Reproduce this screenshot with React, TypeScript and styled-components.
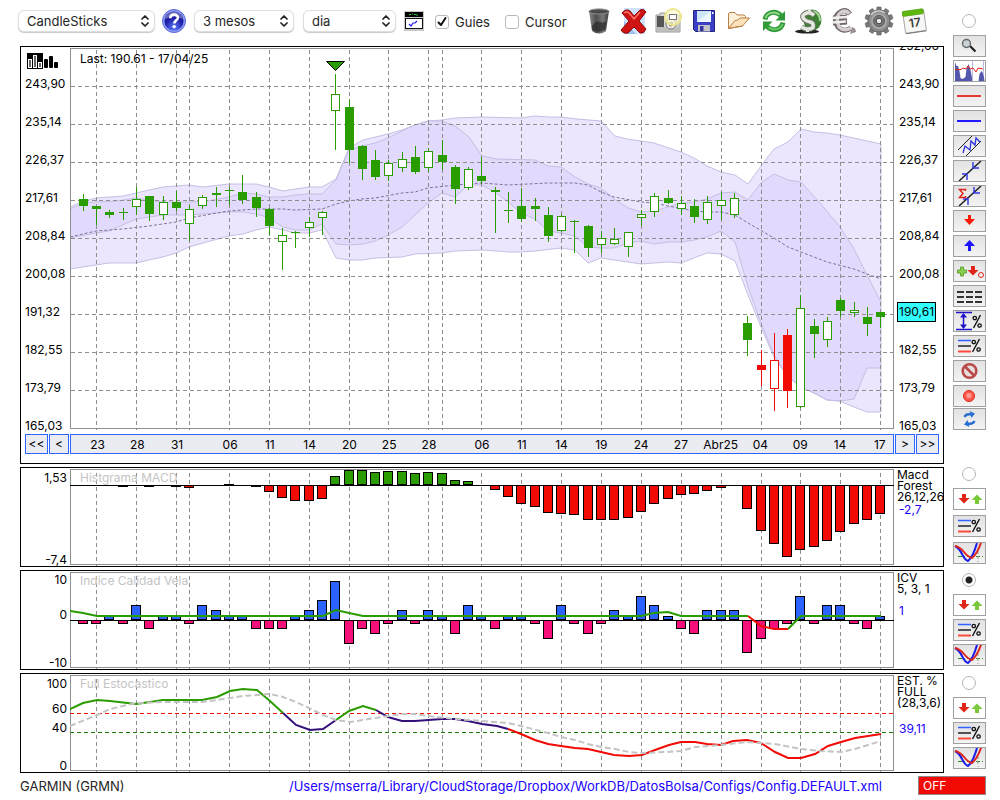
import React, { useState } from "react";
import styled, { createGlobalStyle } from "styled-components";

const GlobalStyle = createGlobalStyle`
  *, *::before, *::after { box-sizing: border-box; }
  body {
    margin: 0;
    background: #fff;
    color: #000;
    font-family: Inter, "Liberation Sans", sans-serif;
    font-size: 12px;
  }
  button, select, input { font: inherit; color: inherit; margin: 0; }
  svg { display: block; }
`;

/* ---------- layout ---------- */

const Workspace = styled.div`
  display: grid;
  grid-template-columns: minmax(0, 1fr) 33px;
  column-gap: 9px;
  row-gap: 3px;
  padding: 0 14px 0 18px;
`;

const Toolbar = styled.header`
  display: flex;
  align-items: center;
  height: 46px;
  padding-bottom: 4px;
`;

const Panel = styled.section`
  margin-left: 2px;
  border: 1px solid #000;
  overflow: hidden;
`;

const PlotRow = styled.div`
  display: grid;
  grid-template-columns: 49px minmax(0, 1fr) 49px;
`;

const PlotArea = styled.div`
  position: relative;
`;

const Caption = styled.div<{ $muted?: boolean }>`
  position: absolute;
  left: 10px;
  top: ${(p) => (p.$muted ? 3 : 5)}px;
  line-height: 14px;
  color: ${(p) => (p.$muted ? "#c4c4c4" : "#000")};
`;

const PlotSvg = styled.svg`
  width: 100%;
`;

/* ---------- toolbar ---------- */

const SelectBox = styled.div<{ $width: number; $after: number }>`
  position: relative;
  width: ${(p) => p.$width}px;
  margin-right: ${(p) => p.$after}px;
  svg {
    position: absolute;
    right: 6px;
    top: 5px;
    pointer-events: none;
  }
`;

const Select = styled.select`
  appearance: none;
  width: 100%;
  height: 22px;
  padding: 0 20px 0 8px;
  border: 1px solid #dedede;
  border-radius: 6px;
  background: #fff;
  box-shadow: 0 1px 1px rgba(0, 0, 0, 0.22);
  font-size: 13px;
  color: #262626;
`;

const IconButton = styled.button<{ $width: number; $after?: number }>`
  display: flex;
  align-items: center;
  justify-content: center;
  width: ${(p) => p.$width}px;
  height: 28px;
  margin-right: ${(p) => p.$after || 0}px;
  padding: 0;
  border: 0;
  background: none;
`;

const Check = styled.label`
  display: flex;
  align-items: center;
  gap: 6px;
  position: relative;
  width: 70px;
  padding-top: 2px;
  font-size: 13px;
  line-height: 16px;
  color: #262626;
  svg {
    position: absolute;
    left: 2px;
    top: 4px;
    pointer-events: none;
  }
`;

const CheckInput = styled.input`
  appearance: none;
  width: 14px;
  height: 14px;
  border: 1px solid #b9b9b9;
  border-radius: 3px;
  background: #fff;
`;

const IconStrip = styled.div`
  display: flex;
  gap: 3px;
  margin-left: 8px;
`;

/* ---------- axes ---------- */

const PriceAxis = styled.div<{ $side: "left" | "right" }>`
  display: flex;
  flex-direction: column;
  align-items: flex-start;
  gap: 24px;
  height: 387px;
  padding-left: ${(p) => (p.$side === "left" ? 4 : 5)}px;
  margin-top: ${(p) => (p.$side === "right" ? "-8px" : "0")};
  padding-top: ${(p) => (p.$side === "left" ? "5px" : "0")};
  > svg + div { margin-top: -16px; }
`;

const PriceLabel = styled.div`
  display: flex;
  align-items: center;
  height: 14px;
  line-height: 14px;
`;

const PriceTag = styled.span`
  margin-left: -2px;
  padding: 2px 1px;
  border: 1px solid #000;
  background: #3ff;
`;

const ValueAxis = styled.div`
  display: flex;
  flex-direction: column;
  padding-right: 3px;
`;

const ValueLabel = styled.div<{ $slot: number }>`
  display: flex;
  align-items: flex-end;
  justify-content: flex-end;
  height: ${(p) => p.$slot}px;
  line-height: 12px;
`;

const Legend = styled.div`
  padding: 1px 0 0 3px;
  line-height: 11px;
  white-space: nowrap;
`;

const LegendValue = styled.div<{ $space: number }>`
  margin-top: ${(p) => p.$space}px;
  padding-left: 2px;
  line-height: 14px;
  color: #2000ff;
`;

const DateBar = styled.nav`
  display: flex;
  gap: 1px;
  padding: 0 4px 9px;
`;

const DateButton = styled.button<{ $width: number }>`
  width: ${(p) => p.$width}px;
  height: 20px;
  padding: 0;
  border: 1px solid #2f63ff;
  background: #ebebf2;
  line-height: 18px;
`;

const Dates = styled.div`
  flex: 1;
  min-width: 0;
  display: grid;
  grid-template-columns: repeat(62, minmax(0, 1fr));
  height: 20px;
  border: 1px solid #2f63ff;
  background: #ebebf2;
  line-height: 20px;
`;

const DateLabel = styled.span<{ $day: number }>`
  grid-row: 1;
  grid-column: ${(p) => p.$day} / span 2;
  justify-self: center;
`;

/* ---------- side tools ---------- */

const ToolGroup = styled.div<{ $top: number; $gap: number }>`
  display: flex;
  flex-direction: column;
  gap: ${(p) => p.$gap}px;
  padding-top: ${(p) => p.$top}px;
`;

const RadioRow = styled.label<{ $gap: number }>`
  display: flex;
  justify-content: center;
  margin-bottom: ${(p) => 7 - p.$gap}px;
  padding-right: 2px;
`;

const RadioInput = styled.input`
  appearance: none;
  width: 14px;
  height: 14px;
  border: 1px solid #b5b5b5;
  border-radius: 50%;
  background: #fff;
  &:checked {
    background: radial-gradient(circle, #222 0 3px, #fff 4px);
  }
`;

const ToolButton = styled.button<{ $plain?: boolean }>`
  display: block;
  width: 33px;
  height: 22px;
  padding: 0;
  border: 1px solid #a0a0a0;
  background: ${(p) => (p.$plain ? "#fff" : "linear-gradient(#e2e2e2, #f3f3f3)")};
`;

const ToolPair = styled.div`
  display: flex;
  flex-direction: column;
  gap: 1px;
`;

/* ---------- footer ---------- */

const Footer = styled.footer`
  display: flex;
  align-items: center;
  padding: 3px 14px 4px 20px;
  font-size: 13px;
  line-height: 16px;
`;

const Company = styled.span`
  flex: 1;
  color: #262626;
`;

const ConfigLink = styled.a`
  margin-right: 36px;
  color: #2000ff;
  text-decoration: none;
`;

const OffButton = styled.button`
  width: 68px;
  height: 19px;
  padding: 0 4px;
  border: 1px solid #8c8c8c;
  background: #f20a05;
  color: #fff;
  font-size: 12px;
  line-height: 16px;
  text-align: left;
`;

/* ---------- chart data ---------- */

const dayX = (i: number) => Math.floor(69.97 + 13.29 * i);

const guideDays = [2, 5, 8, 9, 12, 15, 18, 21, 24, 27, 28, 31, 34, 37, 40, 43, 46, 49, 52, 55, 58, 61];

const dates: [number, string][] = [
  [2, "23"], [5, "28"], [8, "31"], [12, "06"], [15, "11"], [18, "14"], [21, "20"], [24, "25"],
  [27, "28"], [31, "06"], [34, "11"], [37, "14"], [40, "19"], [43, "24"], [46, "27"],
  [49, "Abr25"], [52, "04"], [55, "09"], [58, "14"], [61, "17"],
];

const prices = ["243,90", "235,14", "226,37", "217,61", "208,84", "200,08", "191,32", "182,55", "173,79", "165,03"];

/* high, body top, body bottom, low, kind: f filled, h hollow, F/H the same in red */
const candles: [number, number, number, number, string][] = [
  [194, 199, 206, 211, "f"], [206, 206, 209, 225, "f"], [210, 212, 215, 218, "f"], [208, 212, 213, 220, "f"],
  [187, 199, 207, 215, "h"], [196, 196, 214, 221, "f"], [196, 202, 215, 220, "h"], [191, 202, 208, 211, "f"],
  [205, 209, 224, 241, "h"], [195, 197, 206, 209, "h"], [187, 193, 195, 207, "f"], [187, 190, 191, 205, "f"],
  [175, 192, 200, 204, "f"], [192, 197, 208, 217, "f"], [208, 209, 226, 235, "f"], [228, 235, 242, 270, "h"],
  [231, 232, 233, 248, "f"], [217, 222, 228, 237, "h"], [211, 212, 218, 235, "h"], [74, 94, 111, 150, "h"],
  [100, 107, 150, 163, "f"], [145, 146, 169, 180, "f"], [150, 160, 177, 180, "f"], [160, 163, 176, 181, "h"],
  [152, 159, 168, 172, "h"], [146, 157, 172, 174, "f"], [148, 151, 168, 172, "h"], [140, 155, 162, 170, "f"],
  [165, 167, 189, 204, "f"], [167, 169, 188, 190, "h"], [157, 176, 181, 184, "f"], [187, 190, 192, 233, "f"],
  [192, 210, 211, 223, "f"], [188, 206, 219, 222, "f"], [198, 206, 209, 221, "f"], [207, 215, 236, 242, "f"],
  [214, 216, 231, 232, "h"], [220, 221, 222, 253, "f"], [225, 226, 248, 257, "f"], [231, 238, 245, 253, "h"],
  [228, 239, 244, 245, "h"], [232, 232, 247, 257, "h"], [210, 214, 218, 226, "h"], [193, 196, 212, 217, "h"],
  [190, 198, 203, 204, "f"], [196, 203, 209, 215, "h"], [199, 206, 217, 223, "f"], [196, 202, 220, 224, "h"],
  [192, 200, 206, 220, "h"], [193, 198, 215, 218, "h"], [316, 323, 340, 356, "f"], [350, 365, 370, 386, "F"],
  [333, 360, 389, 411, "H"], [329, 335, 391, 408, "F"], [295, 308, 407, 408, "h"], [319, 326, 334, 358, "f"],
  [317, 321, 340, 347, "h"], [298, 300, 311, 317, "f"], [302, 310, 313, 317, "h"], [307, 317, 324, 336, "f"],
  [312, 312, 317, 328, "f"],
];

const bandTop = "70,207 83,201 97,198 123,196 136,193 163,187 189,185 203,187 229,184 256,184 269,187 283,191 309,187 322,187 336,179 349,148 363,140 388,134 402,130 415,125 428,121 442,120 455,118 482,117 521,118 535,116 548,117 561,117 577,119 601,121 615,136 627,139 641,141 654,143 681,152 694,158 707,166 721,172 735,175 748,184 761,166 774,149 788,142 801,129 814,132 827,133 840,135 881,144";
const innerTop = "70,209 83,203 96,202 117,201 136,198 149,200 163,202 189,202 207,201 229,197 243,193 256,194 269,197 283,197 295,195 309,194 322,194 336,180 349,150 362,146 375,143 388,138 402,131 415,125 428,121 442,121 455,126 469,137 482,156 497,159 535,160 548,166 561,167 575,177 588,184 601,188 614,199 628,208 641,212 654,211 668,207 681,203 694,202 707,199 721,193 735,192 748,200 761,183 774,174 788,180 801,182 820,203 840,227 854,249 867,275 881,302";
const innerBottom = "70,238 96,233 109,231 136,219 149,217 163,215 189,215 229,212 243,212 256,214 267,217 283,227 295,230 309,230 322,224 336,244 349,245 363,244 375,241 388,235 402,227 415,215 428,203 442,193 455,197 468,185 482,185 495,192 508,202 521,213 535,219 548,231 561,233 575,236 588,247 601,248 614,248 628,243 641,241 654,244 668,242 681,242 694,240 707,237 721,231 735,242 748,287 761,323 774,355 788,377 801,387 814,393 827,400 840,401 854,399 867,368 881,368";
const bandBottom = "70,269 83,267 109,263 136,263 149,260 163,257 176,253 189,247 203,243 229,236 243,234 256,230 269,227 283,230 295,233 309,233 322,230 336,258 349,260 362,260 375,258 402,257 415,254 442,253 455,251 482,250 510,252 521,252 535,251 561,248 575,250 588,263 601,258 614,260 628,262 641,264 654,263 668,262 681,263 694,258 707,253 721,254 735,261 748,295 761,327 774,357 788,377 801,387 814,393 827,400 840,401 854,407 867,412 881,412";
const average = "70,237 96,231 123,229 149,226 176,222 189,218 217,213 229,211 256,209 283,209 295,210 322,209 336,204 349,201 362,199 375,198 402,193 415,192 428,188 455,185 468,184 482,183 508,185 548,183 575,183 588,185 601,192 614,197 641,202 654,203 668,206 694,211 707,212 721,212 735,215 748,223 774,238 788,247 814,257 827,262 854,269 867,274 881,279";

/* end of each bar on the plot, by day */
const macdBars: Record<number, number> = {
  4: 487, 6: 487, 8: 487, 9: 488, 12: 484, 14: 487, 15: 492, 16: 498, 17: 501, 18: 501, 19: 499,
  20: 476, 21: 470, 22: 470, 23: 472, 24: 471, 25: 471, 26: 473, 27: 472, 28: 473, 29: 480, 30: 481,
  32: 490, 33: 497, 34: 504, 35: 507, 36: 513, 37: 514, 38: 515, 39: 520, 40: 520, 41: 520, 42: 518,
  43: 512, 44: 504, 45: 499, 46: 495, 47: 494, 48: 491, 49: 488, 51: 509, 52: 531, 53: 544, 54: 557,
  55: 550, 56: 547, 57: 541, 58: 532, 59: 524, 60: 520, 61: 514,
};

const icvBars: Record<number, number> = {
  1: 624, 2: 624, 3: 616, 4: 624, 5: 605, 6: 629, 7: 616, 8: 616, 9: 624, 10: 605, 11: 610, 12: 616,
  13: 616, 14: 629, 15: 629, 16: 629, 17: 616, 18: 610, 19: 600, 20: 581, 21: 644, 22: 629, 23: 634,
  24: 624, 25: 610, 26: 624, 27: 610, 28: 616, 29: 634, 30: 605, 31: 616, 32: 629, 33: 616, 34: 616,
  35: 624, 36: 639, 37: 605, 38: 624, 39: 634, 40: 624, 41: 610, 42: 616, 43: 596, 44: 605, 45: 616,
  46: 629, 47: 634, 48: 610, 49: 610, 50: 610, 51: 653, 52: 639, 53: 629, 54: 624, 55: 596, 56: 624,
  57: 605, 58: 605, 59: 624, 60: 629, 61: 616,
};

const icvLine: [string, string][] = [
  ["#2a9c00", "70,611 83,613 97,616 323,616 336,610 349,613 363,616 641,616 654,613 668,612 681,616 748,616"],
  ["#f20a05", "748,616 761,626 774,629 788,629"],
  ["#2a9c00", "788,629 801,616 881,616"],
];

const stochLine: [string, string][] = [
  ["#2a9c00", "70,709 83,703 97,700 110,701 136,704 150,702 163,700 202,700 217,697 230,691 243,689 257,690 270,701 283,713"],
  ["#33107a", "283,713 296,725 310,730 323,729 336,720"],
  ["#2a9c00", "336,720 349,711 363,706 376,710"],
  ["#33107a", "376,710 388,717 402,721 415,721 442,719 455,719 468,721 482,724 497,726 508,729"],
  ["#f20a05", "508,729 521,734 535,740 548,744 561,746 575,748 588,749 601,752 614,755 629,756 642,755 655,750 669,745 681,742 695,742 707,744 721,745 733,741 747,740 761,743 775,752 788,758 801,758 815,754 828,746 841,742 855,738 881,734"],
];
const stochSignal = "70,726 97,715 110,709 136,703 163,702 202,702 217,700 243,696 270,694 283,697 296,702 309,708 323,715 336,720 350,722 363,720 388,716 402,714 415,714 428,716 455,719 482,721 508,723 521,726 548,733 561,737 575,740 588,744 601,747 615,749 629,752 642,753 667,752 681,751 695,747 721,745 747,742 775,744 801,749 820,751 841,752 855,749 881,741";

const reversed = (points: string) => points.split(" ").reverse().join(" ");

/* ---------- charts ---------- */

function Guides({ top, bottom }: { top: number; bottom: number }) {
  return (
    <g stroke="#8e8e8e" strokeDasharray="4 3">
      {guideDays.map((d) => (
        <path key={d} d={`M${dayX(d) + 0.5} ${top}V${bottom}`} />
      ))}
    </g>
  );
}

function PriceChart() {
  return (
    <PlotSvg viewBox="70 47 824 387" height={387} preserveAspectRatio="none" role="img" aria-label="GARMIN candlesticks">
      <polygon points={`${bandTop} ${reversed(bandBottom)}`} fill="#ebe6fe" />
      <polygon points={`${innerTop} ${reversed(innerBottom)}`} fill="#e2dafc" />
      <g fill="none" stroke="#c5bfe3">
        <polygon points={`${bandTop} ${reversed(bandBottom)}`} />
        <polyline points={innerTop} />
        <polyline points={innerBottom} />
      </g>
      <polyline points={average} fill="none" stroke="#7d7596" strokeDasharray="3 2" />
      <Guides top={50} bottom={430} />
      <g stroke="#8e8e8e" strokeDasharray="4 3">
        {Array.from({ length: 9 }, (_, i) => (
          <path key={i} d={`M71 ${86.5 + i * 38}H894`} />
        ))}
      </g>
      <rect x="70.5" y="48.5" width="823" height="380" fill="none" stroke="#8e8e8e" />
      {candles.map(([high, top, bottom, low, kind], i) => {
        const x = dayX(i + 1);
        const color = kind === "F" || kind === "H" ? "#f20a05" : "#2a9c00";
        const hollow = kind === "h" || kind === "H";
        return (
          <g key={i}>
            <rect x={x} y={high} width="1" height={low - high} fill={color} />
            {hollow ? (
              <rect x={x - 3.5} y={top + 0.5} width="8" height={bottom - top - 1} fill="#fff" stroke={color} />
            ) : (
              <rect x={x - 4} y={top} width="9" height={bottom - top} fill={color} />
            )}
          </g>
        );
      })}
      <path d="M326.5 61.5H344.5L335.5 70.5Z" fill="#2a9c00" stroke="#000" />
    </PlotSvg>
  );
}

function Bars({ data, zero, up, down }: { data: Record<number, number>; zero: number; up: string; down: string }) {
  return (
    <g stroke="#000">
      {Object.entries(data).map(([day, end]) => {
        const x = dayX(Number(day)) - 4.5;
        return end < zero ? (
          <rect key={day} x={x} y={end + 0.5} width="9" height={Math.max(zero - end - 1, 0)} fill={up} />
        ) : (
          <rect key={day} x={x} y={zero + 0.5} width="9" height={end - zero - 1} fill={down} />
        );
      })}
    </g>
  );
}

function PlotFrame({ top }: { top: number }) {
  return <rect x="70.5" y={top + 0.5} width="823" height="95" fill="none" stroke="#8e8e8e" />;
}

function MacdChart() {
  return (
    <PlotSvg viewBox="70 468 824 98" height={98} preserveAspectRatio="none" role="img" aria-label="MACD histogram">
      <Guides top={473} bottom={566} />
      <PlotFrame top={469} />
      <Bars data={macdBars} zero={485} up="#2a9c00" down="#f20a05" />
      <path d="M70 485.5H894M224 484.5H234" stroke="#000" />
    </PlotSvg>
  );
}

function IcvChart() {
  return (
    <PlotSvg viewBox="70 571 824 98" height={98} preserveAspectRatio="none" role="img" aria-label="Indice Calidad Vela">
      <Guides top={576} bottom={669} />
      <PlotFrame top={572} />
      <Bars data={icvBars} zero={620} up="#2a63ff" down="#f5107a" />
      <path d="M70 620.5H894" stroke="#000" />
      {icvLine.map(([color, points], i) => (
        <polyline key={i} points={points} fill="none" stroke={color} strokeWidth="2" />
      ))}
    </PlotSvg>
  );
}

function StochChart() {
  return (
    <PlotSvg viewBox="70 674 824 98" height={98} preserveAspectRatio="none" role="img" aria-label="Full Estocastico">
      <Guides top={679} bottom={772} />
      <PlotFrame top={675} />
      <path d="M70 713.5H894" stroke="#f20a05" strokeDasharray="4 3" />
      <path d="M70 732.5H894" stroke="#1d7a0a" strokeDasharray="4 3" />
      {stochLine.map(([color, points], i) => (
        <polyline key={i} points={points} fill="none" stroke={color} strokeWidth="2" />
      ))}
      <polyline points={stochSignal} fill="none" stroke="#c4c4c4" strokeWidth="2" strokeDasharray="6 3" />
    </PlotSvg>
  );
}

/* ---------- toolbar icons ---------- */

const Chevrons = () => (
  <svg width="8" height="12" viewBox="0 0 8 12" fill="none" stroke="#222" strokeWidth="1.7" strokeLinecap="round" strokeLinejoin="round">
    <path d="M1 4L4 1L7 4M1 8L4 11L7 8" />
  </svg>
);

const HelpIcon = () => (
  <svg width="26" height="26" viewBox="0 0 26 26">
    <defs>
      <radialGradient id="help" cx="0.5" cy="0.85" r="0.8">
        <stop offset="0" stopColor="#5f7dff" />
        <stop offset="0.6" stopColor="#1d1fa8" />
        <stop offset="1" stopColor="#1a1890" />
      </radialGradient>
    </defs>
    <circle cx="13" cy="13" r="11.5" fill="#8ea0f5" stroke="#5a63d8" />
    <circle cx="13" cy="13" r="9.6" fill="url(#help)" />
    <path d="M4 11a9.2 9.2 0 0 1 18 0q-9-5-18 0z" fill="#fff" opacity="0.35" />
    <path d="M9.3 10.2c0-4.8 7.8-4.6 7.6-.4-.1 2.6-3.6 2.6-3.6 5.6" fill="none" stroke="#fff" strokeWidth="2.6" />
    <circle cx="13.2" cy="18.6" r="1.7" fill="#fff" />
  </svg>
);

const ScreenIcon = () => (
  <svg width="20" height="20" viewBox="0 0 20 20">
    <rect width="20" height="20" fill="#c9c9c9" />
    <rect x="1" y="1" width="18" height="5" fill="#000" />
    <path d="M5 3.5h2M8 3h1M10 3.5h2M13 3v2" stroke="#2fbf2f" />
    <rect x="1.5" y="7.5" width="17" height="10" fill="#fff" stroke="#111" />
    <path d="M5 13l2 2 2-3 2 0 2-2" fill="none" stroke="#2418ff" strokeWidth="1.2" />
  </svg>
);

const TrashIcon = () => (
  <svg width="24" height="28" viewBox="0 0 24 28">
    <defs>
      <linearGradient id="bin" x1="0" x2="1">
        <stop offset="0" stopColor="#8b8b8b" />
        <stop offset="0.35" stopColor="#4e4e4e" />
        <stop offset="0.7" stopColor="#777" />
        <stop offset="1" stopColor="#3c3c3c" />
      </linearGradient>
    </defs>
    <path d="M2 4L5 24q7 5 14 0L22 4z" fill="url(#bin)" />
    <path d="M4.5 20q4-7 9-5t6-3l-1 10q-6 5-13 1z" fill="#2c2c2c" opacity="0.75" />
    <ellipse cx="12" cy="4.5" rx="10" ry="2.6" fill="#4a4a4a" stroke="#8d8d8d" />
  </svg>
);

const DeleteIcon = () => (
  <svg width="28" height="28" viewBox="0 0 28 28">
    <rect x="4" y="1" width="21" height="26" fill="#cfe2fb" />
    <path d="M4 14L16 27H4z" fill="#9cc0ee" />
    <path d="M2 6q4-5 8-2l4 5 6-6q4-2 6 2l-7 9 7 8q-2 5-6 4l-6-6-6 6q-5 1-7-3l8-9z" fill="#d01414" stroke="#8c0808" />
    <path d="M4 6q3-2 5 0l5 6 6-7" fill="none" stroke="#ff7a6e" strokeWidth="1.4" />
  </svg>
);

const CameraIcon = () => (
  <svg width="28" height="28" viewBox="0 0 28 28">
    <path d="M1 8h4V6h5v2h15v17H1z" fill="#d6d6d6" stroke="#9a9a9a" />
    <rect x="2" y="9" width="7" height="15" fill="#555" />
    <rect x="2" y="20" width="22" height="4" fill="#bdbdbd" />
    <rect x="10" y="9" width="14" height="11" fill="#c8c8c8" />
    <circle cx="16" cy="17" r="5" fill="#eee" stroke="#777" />
    <circle cx="16" cy="17" r="2.5" fill="#888" />
    <circle cx="18" cy="10" r="8" fill="#fffbd0" fillOpacity="0.65" stroke="#ece68c" strokeWidth="2" />
    <rect x="14.5" y="7.5" width="7" height="5" fill="#fff" stroke="#777" />
  </svg>
);

const FloppyIcon = () => (
  <svg width="22" height="22" viewBox="0 0 22 22">
    <path d="M.5.5h21v21H2.5L.5 19.5z" fill="#3a3fc4" stroke="#23267f" />
    <path d="M4 1h14v11H4z" fill="#cfe6fa" />
    <path d="M4 12L18 1v11z" fill="#eef7ff" />
    <rect x="5" y="15" width="12" height="6.5" fill="#c3c3c9" />
    <rect x="7" y="16" width="3.5" height="5" fill="#34379f" />
    <rect x="19" y="2" width="1.5" height="2" fill="#fff" />
  </svg>
);

const FolderIcon = () => (
  <svg width="24" height="20" viewBox="0 0 24 20" strokeLinejoin="round">
    <path d="M1.5 17.5V2.5l1.5-1h5l2 2.5h7l1.5 1.5V9" fill="#fdf0d8" stroke="#b97f45" />
    <path d="M1.5 17.5L8 9.5l3-.5 2-2 9.5 0L15.5 15z" fill="#fbe2ba" stroke="#b97f45" />
    <path d="M1.5 17.5L15.5 15" stroke="#b97f45" />
  </svg>
);

const RefreshIcon = () => (
  <svg width="26" height="26" viewBox="0 0 26 26" fill="none">
    <path d="M4 11.500C5.500 4 14 2 20 7.500" stroke="#2f9a37" strokeWidth="5" />
    <path d="M24 3v9.500h-9.500z" fill="#2f9a37" />
    <path d="M22 14.500C20.500 22 12 24 6 18.500" stroke="#2f9a37" strokeWidth="5" />
    <path d="M2 23v-9.500h9.500z" fill="#2f9a37" />
    <path d="M4.500 10C6.500 4.500 13 3 18.500 6.500" stroke="#93da8b" strokeWidth="2" />
    <path d="M21.500 16C19.500 21.500 13 23 7.500 19.500" stroke="#6cc768" strokeWidth="2" />
  </svg>
);

const DollarIcon = () => (
  <svg width="28" height="28" viewBox="0 0 28 28" fill="none">
    <ellipse cx="12" cy="24.5" rx="12" ry="2" fill="#222" />
    <ellipse cx="17.5" cy="13" rx="9" ry="10.5" fill="#3f7f35" />
    <path d="M18 4q7 2 7 10" stroke="#a5d894" strokeWidth="2" />
    <path d="M19 8.500Q15 4 10.500 6.500T9 12q2 2.500 6 3t3 5.500Q13 24 6.500 20" stroke="#6d7568" strokeWidth="5.500" />
    <path d="M19 8.500Q15 4 10.500 6.500T9 12q2 2.500 6 3t3 5.500Q13 24 6.500 20" stroke="#e4e8df" strokeWidth="3.600" />
    <path d="M14.500 2v4M12.500 21v4" stroke="#dfe3da" strokeWidth="3" />
  </svg>
);

const EuroIcon = () => (
  <svg width="28" height="28" viewBox="0 0 28 28" fill="none">
    <path d="M20 7Q15 1 9 6T8 20q6 6 13 1M3 11l14-1M3 16l14-1" stroke="#6d6466" strokeWidth="5" />
    <path d="M22 20q4 1 4 5l-6 2" fill="#9a8f90" />
    <path d="M19.5 6.5Q15 2 10 6T9 20q5 5 12 1" stroke="#d5cfd0" strokeWidth="3.4" />
    <path d="M2 11l15-1M2 15.5l14-1" stroke="#f1eeee" strokeWidth="2.6" />
  </svg>
);

const GearIcon = () => (
  <svg width="30" height="30" viewBox="-15 -15 30 30">
    <g fill="#7b7b7b" stroke="#5c5c5c" strokeWidth="0.6">
      {Array.from({ length: 10 }, (_, i) => (
        <path key={i} d="M-2.600-10L-2-14H2L2.600-10z" transform={`rotate(${i * 36})`} />
      ))}
    </g>
    <circle r="11" fill="#8b8b8b" stroke="#666" />
    <circle r="8" fill="#a9a9a9" />
    <circle r="5.5" fill="#777" stroke="#5a5a5a" />
    <circle r="2.8" fill="#ececec" stroke="#444" />
    <path d="M-8-6A10 10 0 0 1 6-8" fill="none" stroke="#ccc" strokeWidth="1.5" />
  </svg>
);

const CalendarIcon = () => (
  <svg width="28" height="26" viewBox="0 0 28 26">
    <g transform="rotate(-8 14 13)">
      <rect x="4" y="3" width="21" height="21" rx="1" fill="#f7f7f5" stroke="#a8a8a8" />
      <path d="M4 24.5H25" stroke="#777" />
      <rect x="3.5" y="2" width="21" height="5" rx="1" fill="#5fb80d" stroke="#4a960a" strokeWidth="0.6" />
      <text x="14.5" y="19" fontSize="12" fontWeight="600" fill="#3a3a3a" textAnchor="middle" fontFamily="Inter, sans-serif">17</text>
    </g>
  </svg>
);

const CandleLogo = () => (
  <svg width="34" height="17" viewBox="-1 0 34 17">
    <rect x="1" y="1" width="16" height="16" />
    <g fill="#666" stroke="#fff">
      <rect x="2.5" y="7.5" width="3" height="8" />
      <rect x="7.5" y="3.5" width="3" height="12" />
      <rect x="12.5" y="10.5" width="3" height="5" />
    </g>
    <rect x="18" y="7" width="4" height="9" rx="1" />
    <rect x="23" y="4" width="4" height="12" rx="1" />
    <rect x="28" y="10" width="4" height="6" rx="1" />
  </svg>
);

/* ---------- side tool icons, all drawn on the 31x20 inside of a button ---------- */

const Glyph = ({ children }: { children: React.ReactNode }) => (
  <svg width="31" height="20" viewBox="0 0 31 20" fill="none">{children}</svg>
);

const Percent = ({ x, y }: { x: number; y: number }) => (
  <g stroke="#111" strokeWidth="1.3" transform={`translate(${x} ${y})`}>
    <path d="M7.5 0L.5 13" strokeWidth="1.4" />
    <circle cx="1.8" cy="3" r="1.7" />
    <circle cx="6.6" cy="10.5" r="1.7" />
  </g>
);

const LevelsPercent = () => (
  <Glyph>
    <path d="M4 4.5H17" stroke="#2f63ff" strokeWidth="1.5" />
    <path d="M4 10H17" stroke="#222" strokeWidth="1.5" />
    <path d="M4 15.5H17" stroke="#fa4b3c" strokeWidth="2" />
    <Percent x={18} y={3} />
  </Glyph>
);

const BuySell = () => (
  <Glyph>
    <path d="M8 5h4v4h3.500L10 14.5 4.5 9H8z" fill="#e0261b" />
    <path d="M21 15h4v-4h3.500L23 5.500 17.500 11H21z" fill="#7ac93b" />
  </Glyph>
);

const CrossCurves = () => (
  <Glyph>
    <path d="M4 13.5H29" stroke="#2f8a1d" strokeDasharray="4 2 1 2" />
    <path d="M24 8V19" stroke="#999" strokeDasharray="3 2" />
    <path d="M1 3Q5 5 8 11T14 18Q19 14 23 0" stroke="#1c1ce8" strokeWidth="2" />
    <path d="M1 3Q6 4 10 9T18 15Q23 11 27 0" stroke="#e0261b" strokeWidth="2" />
  </Glyph>
);

const sideTools: Record<string, React.ReactNode> = {
  Zoom: (
    <Glyph>
      <path d="M16 10L21.5 15.5" stroke="#222" strokeWidth="2.2" />
      <circle cx="12.5" cy="7.5" r="4" fill="#c9d2d8" stroke="#666" strokeWidth="1.4" />
    </Glyph>
  ),
  Overview: (
    <Glyph>
      <rect width="31" height="20" fill="#fff" />
      <path d="M1 20V1l1.500 4 1.500 0 1.500 5 1 7 2 1 3-2 1-8 2-5 2 6 1 5 1 6h6l1-7 2-3 2 3 1 7z" fill="#5458ad" />
      <path d="M18.5 0V20M29.5 0V14" stroke="#b9bbe0" />
      <path d="M1 8.5H7L9 7 12 8 14 5 16 8 19 7 22 11 24 7 29 8" stroke="#e0261b" />
    </Glyph>
  ),
  "Red line": <Glyph><path d="M3 10H27" stroke="#e63a30" strokeWidth="2" /></Glyph>,
  "Blue line": <Glyph><path d="M3 10H27" stroke="#2418ff" strokeWidth="2" /></Glyph>,
  Channel: (
    <Glyph>
      <path d="M4 14L18 0M12 20L27 5" stroke="#222" />
      <path d="M9 17L11 10 16 14 17 5 21 9 22 2 26 6" stroke="#2f35e0" strokeWidth="1.3" />
    </Glyph>
  ),
  Trend: (
    <Glyph>
      <path d="M5 20L27 0" stroke="#222" strokeWidth="1.5" />
      <path d="M8 13H13V19M19 1V7H25" stroke="#2f35e0" strokeWidth="1.4" />
    </Glyph>
  ),
  "Trend sum": (
    <Glyph>
      <path d="M5 20L27 0" stroke="#222" strokeWidth="1.5" />
      <path d="M9 13H14V19M20 1V7H26" stroke="#2f35e0" strokeWidth="1.4" />
      <path d="M11.5 5V3.5H5.5L9 7.5 5.5 11.5H11.5V10" stroke="#e0261b" strokeWidth="1.5" />
    </Glyph>
  ),
  Sell: <Glyph><path d="M14 4h3v4h4l-5.500 6L10 8h4z" fill="#fa1a08" /></Glyph>,
  Buy: <Glyph><path d="M14 15h3v-5h4l-5.500-6L10 10h4z" fill="#1c14ff" /></Glyph>,
  Marks: (
    <Glyph>
      <path d="M6.500 6h3v3h3v3h-3v3h-3v-3h-3V9h3z" fill="#8ad04e" stroke="#4f9b22" strokeWidth="0.8" />
      <path d="M17 5h4v4h3.500L19 14.500 13.500 9H17z" fill="#e0261b" />
      <circle cx="27" cy="14" r="2.5" stroke="#e0261b" />
    </Glyph>
  ),
  Levels: (
    <Glyph>
      <path d="M3 6H28M3 11H28M3 16H28" stroke="#333" strokeWidth="2" strokeDasharray="7 2" />
    </Glyph>
  ),
  "Range percent": (
    <Glyph>
      <path d="M2 1.5H18M2 18.5H18M9.500 3V17" stroke="#2010c8" strokeWidth="1.5" />
      <path d="M9.500 2L13 6.500H6zM9.500 18L13 13.500H6z" fill="#2010c8" />
      <Percent x={19} y={4} />
    </Glyph>
  ),
  "Level percent": <LevelsPercent />,
  Forbid: (
    <Glyph>
      <circle cx="15.5" cy="10" r="6.8" fill="#e9dede" stroke="#b94a4a" strokeWidth="2.6" />
      <path d="M11 5.5L20 14.5" stroke="#b94a4a" strokeWidth="2.6" />
    </Glyph>
  ),
  Record: (
    <Glyph>
      <circle cx="15" cy="10" r="5.5" fill="#ff5a50" stroke="#e0261b" />
      <circle cx="15" cy="9.5" r="2.5" fill="#ff9a90" />
    </Glyph>
  ),
  Reload: (
    <Glyph>
      <path d="M10.5 8Q12 4.5 17 5.5" stroke="#2a6fd0" strokeWidth="2.4" />
      <path d="M15.5 2L21 4.5 17.5 9z" fill="#2a6fd0" />
      <path d="M20.5 12Q19 15.5 14 14.5" stroke="#2a6fd0" strokeWidth="2.4" />
      <path d="M15.5 18L10 15.5 13.5 11z" fill="#2a6fd0" />
    </Glyph>
  ),
};

const mainTools = ["Zoom", "Overview", "Red line", "Blue line", "Channel", "Trend", "Trend sum", "Sell", "Buy", "Marks", "Levels", "Range percent", "Level percent", "Forbid"];

const toolbarActions: [string, React.ReactNode][] = [
  ["Trash", <TrashIcon />], ["Delete", <DeleteIcon />], ["Capture", <CameraIcon />], ["Save", <FloppyIcon />],
  ["Open", <FolderIcon />], ["Refresh", <RefreshIcon />], ["Dollar", <DollarIcon />], ["Euro", <EuroIcon />],
  ["Settings", <GearIcon />], ["Calendar", <CalendarIcon />],
];

/* ---------- composed parts ---------- */

function Picker({ label, value, width, after }: { label: string; value: string; width: number; after: number }) {
  return (
    <SelectBox $width={width} $after={after}>
      <Select aria-label={label} defaultValue={value}>
        <option>{value}</option>
      </Select>
      <Chevrons />
    </SelectBox>
  );
}

function CheckOption({ label, initial }: { label: string; initial: boolean }) {
  const [on, setOn] = useState(initial);
  return (
    <Check>
      <CheckInput type="checkbox" checked={on} onChange={() => setOn(!on)} />
      {on && (
        <svg width="10" height="11" viewBox="0 0 10 11" fill="none" stroke="#111" strokeWidth="2" strokeLinecap="round" strokeLinejoin="round">
          <path d="M1.5 6.5L4 9L8.5 2" />
        </svg>
      )}
      {label}
    </Check>
  );
}

function PanelRadio({ label, checked, gap, onPick }: { label: string; checked: boolean; gap: number; onPick: () => void }) {
  return (
    <RadioRow $gap={gap}>
      <RadioInput type="radio" name="panel" aria-label={label} checked={checked} onChange={onPick} />
    </RadioRow>
  );
}

const indicators = [
  { title: "Histgrama MACD", chart: <MacdChart />, axis: [["1,53", 16], ["-7,4", 82]], legend: ["Macd", "Forest", "26,12,26"], value: "-2,7", space: 1, top: 0, gap: 5 },
  { title: "Indice Calidad Vela", chart: <IcvChart />, axis: [["10", 15], ["0", 35], ["-10", 48]], legend: ["ICV", "5, 3, 1"], value: "1", space: 10, top: 3, gap: 3 },
  { title: "Full Estocastico", chart: <StochChart />, axis: [["100", 16], ["60", 25], ["40", 19], ["0", 38]], legend: ["EST. %", "FULL", "(28,3,6)"], value: "39,11", space: 14, top: 3, gap: 3 },
] as const;

export default function App() {
  const [active, setActive] = useState("Indice Calidad Vela");
  return (
    <>
      <GlobalStyle />
      <Workspace>
        <div>
          <Toolbar>
            <Picker label="Chart type" value="CandleSticks" width={137} after={6} />
            <IconButton $width={26} $after={7} aria-label="Help"><HelpIcon /></IconButton>
            <Picker label="Period" value="3 mesos" width={100} after={9} />
            <Picker label="Interval" value="dia" width={93} after={8} />
            <IconButton $width={20} $after={11} aria-label="Screen"><ScreenIcon /></IconButton>
            <CheckOption label="Guies" initial />
            <CheckOption label="Cursor" initial={false} />
            <IconStrip>
              {toolbarActions.map(([name, icon]) => (
                <IconButton key={name} $width={32} aria-label={name}>{icon}</IconButton>
              ))}
            </IconStrip>
          </Toolbar>
          <Panel>
            <PlotRow>
              <PriceAxis $side="left">
                <CandleLogo />
                {prices.map((p) => <PriceLabel key={p}>{p}</PriceLabel>)}
              </PriceAxis>
              <PlotArea>
                <PriceChart />
                <Caption>Last: 190.61 - 17/04/25</Caption>
              </PlotArea>
              <PriceAxis $side="right">
                <PriceLabel>252,66</PriceLabel>
                {prices.map((p) => (
                  <PriceLabel key={p}>{p === "191,32" ? <PriceTag>190,61</PriceTag> : p}</PriceLabel>
                ))}
              </PriceAxis>
            </PlotRow>
            <DateBar aria-label="Dates">
              <DateButton $width={23}>&lt;&lt;</DateButton>
              <DateButton $width={20}>&lt;</DateButton>
              <Dates>
                {dates.map(([day, text]) => <DateLabel key={day} $day={day}>{text}</DateLabel>)}
              </Dates>
              <DateButton $width={20}>&gt;</DateButton>
              <DateButton $width={23}>&gt;&gt;</DateButton>
            </DateBar>
          </Panel>
        </div>
        <ToolGroup $top={14} $gap={3}>
          <PanelRadio label="Price" gap={3} checked={active === "Price"} onPick={() => setActive("Price")} />
          {mainTools.map((t) => <ToolButton key={t} aria-label={t}>{sideTools[t]}</ToolButton>)}
          <ToolPair>
            <ToolButton aria-label="Record">{sideTools.Record}</ToolButton>
            <ToolButton aria-label="Reload">{sideTools.Reload}</ToolButton>
          </ToolPair>
        </ToolGroup>
        {indicators.map((ind) => (
          <React.Fragment key={ind.title}>
            <Panel>
              <PlotRow>
                <ValueAxis>
                  {ind.axis.map(([text, slot]) => <ValueLabel key={text} $slot={slot}>{text}</ValueLabel>)}
                </ValueAxis>
                <PlotArea>
                  {ind.chart}
                  <Caption $muted>{ind.title}</Caption>
                </PlotArea>
                <Legend>
                  {ind.legend.map((line) => <div key={line}>{line}</div>)}
                  <LegendValue $space={ind.space}>{ind.value}</LegendValue>
                </Legend>
              </PlotRow>
            </Panel>
            <ToolGroup $top={ind.top} $gap={ind.gap}>
              <PanelRadio label={ind.title} gap={ind.gap} checked={active === ind.title} onPick={() => setActive(ind.title)} />
              <ToolButton $plain aria-label="Signals"><BuySell /></ToolButton>
              <ToolButton aria-label="Levels"><LevelsPercent /></ToolButton>
              <ToolButton aria-label="Curves"><CrossCurves /></ToolButton>
            </ToolGroup>
          </React.Fragment>
        ))}
      </Workspace>
      <Footer>
        <Company>GARMIN (GRMN)</Company>
        <ConfigLink href="#config">/Users/mserra/Library/CloudStorage/Dropbox/WorkDB/DatosBolsa/Configs/Config.DEFAULT.xml</ConfigLink>
        <OffButton>OFF</OffButton>
      </Footer>
    </>
  );
}
